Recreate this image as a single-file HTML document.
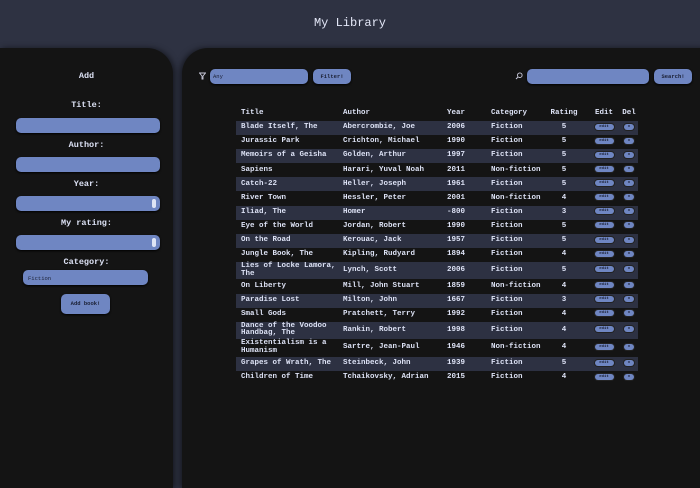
<!DOCTYPE html>
<html><head><style>
*{box-sizing:border-box;margin:0;padding:0}
body{width:700px;height:481px;background:#2e3242;font-family:"Liberation Mono",monospace;color:#dde2f5;position:relative;overflow:hidden;font-weight:bold}
h1{position:absolute;top:16px;width:100%;text-align:center;font-size:12px;font-weight:normal;color:#e4e8f8}
.lp{position:absolute;left:0;top:48px;width:173px;height:440px;background:#141414;border-radius:0 26px 0 0;box-shadow:2px 0 6px rgba(0,0,0,.5)}
.rp{position:absolute;left:182px;top:48px;width:530px;height:440px;background:#141414;border-radius:26px 0 0 0;box-shadow:-2px 0 6px rgba(0,0,0,.5)}
.lab{position:absolute;width:173px;text-align:center;font-size:8.5px}
.in{position:absolute;background:#6f86c2;border-radius:5px;box-shadow:0 1px 2px #000}
.btn{position:absolute;background:#6f86c2;border-radius:5px;font-size:5.5px;color:#1a1f33;text-align:center;box-shadow:0 1px 2px #000}
.sp{position:absolute;right:4px;top:3px;width:4px;height:9px;background:#dfe5f5;border-radius:2px}
table{position:absolute;left:54px;top:59px;border-collapse:collapse;font-size:7.5px;width:402px;table-layout:fixed}
td,th{padding:0 5px;height:14.1px;text-align:left;line-height:7.5px;white-space:nowrap;overflow:visible}
th{height:14px}
th.c,td.c{padding:0}
tr:nth-child(even) td{background:#2d3142}
.c{text-align:center}
.e,.d{display:inline-block;height:6px;background:#6f86c2;border-radius:3px;vertical-align:middle;font-size:4px;line-height:6px;color:#1a1f33;box-shadow:0 0 0 1px #222}
.e{width:19px}.d{width:10px}
.tw td{height:17.5px}
</style></head><body>
<h1>My Library</h1>
<div class="lp">
<div class="lab" style="top:23px">Add</div>
<div class="lab" style="top:52px">Title:</div>
<div class="in" style="left:16px;top:70px;width:144px;height:15px"></div>
<div class="lab" style="top:92px">Author:</div>
<div class="in" style="left:16px;top:109px;width:144px;height:15px"></div>
<div class="lab" style="top:131px">Year:</div>
<div class="in" style="left:16px;top:148px;width:144px;height:15px"><div class="sp"></div></div>
<div class="lab" style="top:170px">My rating:</div>
<div class="in" style="left:16px;top:187px;width:144px;height:15px"><div class="sp"></div></div>
<div class="lab" style="top:209px">Category:</div>
<div class="in" style="left:23px;top:222px;width:125px;height:15px;font-size:5.5px;color:#1a1f33;padding:5px 5px;font-weight:normal">Fiction</div>
<div class="btn" style="left:61px;top:246px;width:49px;height:20px;line-height:20px">Add book!</div>
</div>
<div class="rp">
<svg style="position:absolute;left:17px;top:24px" width="7" height="8" viewBox="0 0 7 8"><path d="M0.5 1h6L4 4v3H3V4z" fill="none" stroke="#ccd" stroke-width="0.9"/></svg>
<div class="in" style="left:28px;top:21px;width:98px;height:15px;font-size:5.5px;color:#1a1f33;padding:4px 3px;font-weight:normal">Any</div>
<div class="btn" style="left:131px;top:21px;width:38px;height:15px;line-height:15px">Filter!</div>
<svg style="position:absolute;left:333px;top:24px" width="8" height="8" viewBox="0 0 8 8"><circle cx="4.8" cy="3.2" r="2.3" fill="none" stroke="#ccd" stroke-width="0.9"/><path d="M3.2 4.8L1 7" stroke="#ccd" stroke-width="1"/></svg>
<div class="in" style="left:345px;top:21px;width:122px;height:15px"></div>
<div class="btn" style="left:472px;top:21px;width:38px;height:15px;line-height:15px">Search!</div>
<table>
<colgroup><col style="width:102px"><col style="width:104px"><col style="width:44px"><col style="width:54px"><col style="width:48px"><col style="width:32px"><col style="width:18px"></colgroup>
<tr><th>Title</th><th>Author</th><th>Year</th><th>Category</th><th class="c">Rating</th><th class="c">Edit</th><th class="c">Del</th></tr>
<tr><td>Blade Itself, The</td><td>Abercrombie, Joe</td><td>2006</td><td>Fiction</td><td class="c">5</td><td class="c"><span class="e">edit</span></td><td class="c"><span class="d">x</span></td></tr>
<tr><td>Jurassic Park</td><td>Crichton, Michael</td><td>1990</td><td>Fiction</td><td class="c">5</td><td class="c"><span class="e">edit</span></td><td class="c"><span class="d">x</span></td></tr>
<tr><td>Memoirs of a Geisha</td><td>Golden, Arthur</td><td>1997</td><td>Fiction</td><td class="c">5</td><td class="c"><span class="e">edit</span></td><td class="c"><span class="d">x</span></td></tr>
<tr><td>Sapiens</td><td>Harari, Yuval Noah</td><td>2011</td><td>Non-fiction</td><td class="c">5</td><td class="c"><span class="e">edit</span></td><td class="c"><span class="d">x</span></td></tr>
<tr><td>Catch-22</td><td>Heller, Joseph</td><td>1961</td><td>Fiction</td><td class="c">5</td><td class="c"><span class="e">edit</span></td><td class="c"><span class="d">x</span></td></tr>
<tr><td>River Town</td><td>Hessler, Peter</td><td>2001</td><td>Non-fiction</td><td class="c">4</td><td class="c"><span class="e">edit</span></td><td class="c"><span class="d">x</span></td></tr>
<tr><td>Iliad, The</td><td>Homer</td><td>-800</td><td>Fiction</td><td class="c">3</td><td class="c"><span class="e">edit</span></td><td class="c"><span class="d">x</span></td></tr>
<tr><td>Eye of the World</td><td>Jordan, Robert</td><td>1990</td><td>Fiction</td><td class="c">5</td><td class="c"><span class="e">edit</span></td><td class="c"><span class="d">x</span></td></tr>
<tr><td>On the Road</td><td>Kerouac, Jack</td><td>1957</td><td>Fiction</td><td class="c">5</td><td class="c"><span class="e">edit</span></td><td class="c"><span class="d">x</span></td></tr>
<tr><td>Jungle Book, The</td><td>Kipling, Rudyard</td><td>1894</td><td>Fiction</td><td class="c">4</td><td class="c"><span class="e">edit</span></td><td class="c"><span class="d">x</span></td></tr>
<tr class="tw"><td>Lies of Locke Lamora,<br>The</td><td>Lynch, Scott</td><td>2006</td><td>Fiction</td><td class="c">5</td><td class="c"><span class="e">edit</span></td><td class="c"><span class="d">x</span></td></tr>
<tr><td>On Liberty</td><td>Mill, John Stuart</td><td>1859</td><td>Non-fiction</td><td class="c">4</td><td class="c"><span class="e">edit</span></td><td class="c"><span class="d">x</span></td></tr>
<tr><td>Paradise Lost</td><td>Milton, John</td><td>1667</td><td>Fiction</td><td class="c">3</td><td class="c"><span class="e">edit</span></td><td class="c"><span class="d">x</span></td></tr>
<tr><td>Small Gods</td><td>Pratchett, Terry</td><td>1992</td><td>Fiction</td><td class="c">4</td><td class="c"><span class="e">edit</span></td><td class="c"><span class="d">x</span></td></tr>
<tr class="tw"><td>Dance of the Voodoo<br>Handbag, The</td><td>Rankin, Robert</td><td>1998</td><td>Fiction</td><td class="c">4</td><td class="c"><span class="e">edit</span></td><td class="c"><span class="d">x</span></td></tr>
<tr class="tw"><td>Existentialism is a<br>Humanism</td><td>Sartre, Jean-Paul</td><td>1946</td><td>Non-fiction</td><td class="c">4</td><td class="c"><span class="e">edit</span></td><td class="c"><span class="d">x</span></td></tr>
<tr><td>Grapes of Wrath, The</td><td>Steinbeck, John</td><td>1939</td><td>Fiction</td><td class="c">5</td><td class="c"><span class="e">edit</span></td><td class="c"><span class="d">x</span></td></tr>
<tr><td>Children of Time</td><td>Tchaikovsky, Adrian</td><td>2015</td><td>Fiction</td><td class="c">4</td><td class="c"><span class="e">edit</span></td><td class="c"><span class="d">x</span></td></tr>
</table>
</div>
</body></html>
